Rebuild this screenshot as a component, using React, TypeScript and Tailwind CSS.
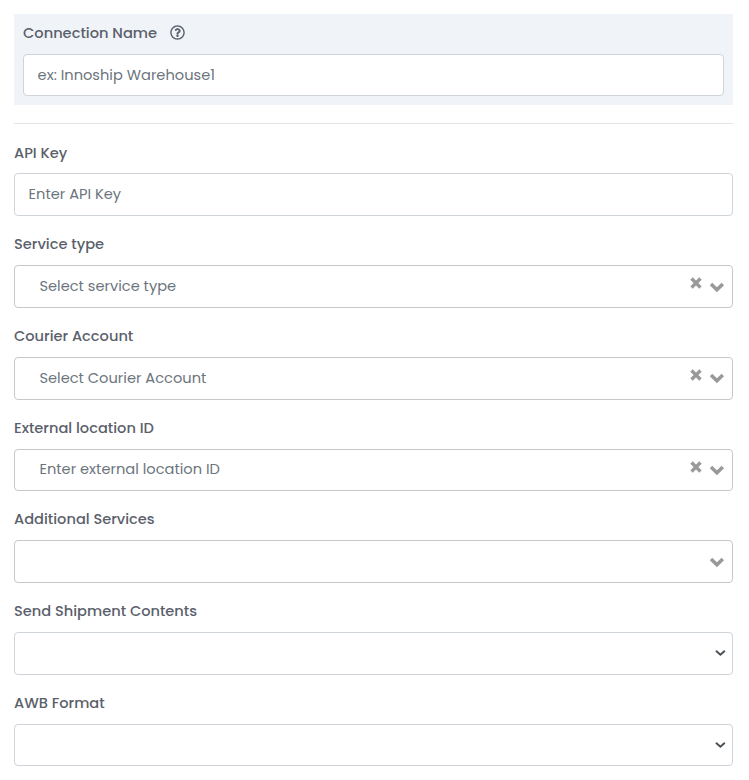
import type { ReactNode } from 'react';
import { FaRegQuestionCircle } from 'react-icons/fa';

interface FieldProps {
  id: string;
  label: string;
  children: ReactNode;
}

function Field({ id, label, children }: FieldProps) {
  return (
    <div>
      <div className="h-[49.02px] pt-[18.2px]">
        <label
          htmlFor={id}
          className="block w-fit text-[14.6px] font-medium leading-[21px] text-[#5b5f6b]"
        >
          {label}
        </label>
      </div>
      {children}
    </div>
  );
}

interface ComboBoxProps {
  id: string;
  placeholder?: string;
  clearable?: boolean;
}

function ComboBox({ id, placeholder = '', clearable = false }: ComboBoxProps) {
  return (
    <div className="flex h-[42.7px] rounded border border-[#c8c8c8] bg-white pl-[24.4px] pr-[8px]">
      <input
        id={id}
        type="text"
        placeholder={placeholder}
        className="min-w-0 flex-1 bg-transparent pt-[0.9px] text-[14.63px] outline-none placeholder:text-[#6c757d]"
      />
      {clearable && (
        <button type="button" aria-label="Clear" className="mr-[7px] mt-[11px] h-[12px] w-[12px]">
          <svg viewBox="0 0 12 12" className="block h-[12px] w-[12px]" fill="none" stroke="#999" strokeWidth="3.3">
            <path d="M1.5 1.5 10.5 10.5M10.5 1.5 1.5 10.5" />
          </svg>
        </button>
      )}
      <button type="button" aria-label="Open" className="mt-[15.4px] h-[11px] w-[15px]">
        <svg viewBox="0 0 15 11" className="block h-[11px] w-[15px] overflow-visible" fill="none" stroke="#999" strokeWidth="3.5">
          <path d="M2 1.9 7.9 7.7 13.8 1.9" />
        </svg>
      </button>
    </div>
  );
}

function SelectBox({ id }: { id: string }) {
  return (
    <div className="flex h-[42.7px] items-center rounded border border-[#ced4da] bg-white pr-[6px]">
      <select id={id} className="h-full min-w-0 flex-1 appearance-none bg-transparent outline-none" />
      <svg viewBox="0 0 12 8" className="h-[8px] w-[12px]" fill="none" stroke="#495057" strokeWidth="2" strokeLinecap="round">
        <path d="M2.5 2.3 6.4 5.7 10.3 2.3" />
      </svg>
    </div>
  );
}

export default function App() {
  return (
    <form className="min-h-[780px] bg-white pl-[14px] pr-[16px] pt-[14px] font-[Poppins,Inter,sans-serif]">
      {/* Connection name */}
      <div className="h-[91px] bg-[#f0f4f9] px-[9px] pt-[9px]">
        <div className="flex h-[31px] items-start">
          <label
            htmlFor="connection"
            className="text-[14.63px] font-medium leading-[21px] text-[#5b5f6b]"
          >
            Connection Name
          </label>
          <FaRegQuestionCircle className="ml-[13px] mt-[2px] h-[15px] w-[15px] text-[#5b5f6b]" />
        </div>
        <input
          id="connection"
          type="text"
          placeholder="ex: Innoship Warehouse1"
          className="block h-[42px] w-full rounded border border-[#ced4da] bg-white px-[13.6px] text-[14.63px] outline-none placeholder:text-[#6c757d]"
        />
      </div>

      <hr className="mb-[0.42px] mt-[18px] border-t border-[#e3e4e6]" />

      <Field id="api-key" label="API Key">
        <input
          id="api-key"
          type="text"
          placeholder="Enter API Key"
          className="block h-[42.7px] w-full rounded border border-[#ced4da] bg-white px-[13.6px] text-[14.63px] outline-none placeholder:text-[#6c757d]"
        />
      </Field>
      <Field id="service" label="Service type">
        <ComboBox id="service" placeholder="Select service type" clearable />
      </Field>
      <Field id="courier" label="Courier Account">
        <ComboBox id="courier" placeholder="Select Courier Account" clearable />
      </Field>
      <Field id="location" label="External location ID">
        <ComboBox id="location" placeholder="Enter external location ID" clearable />
      </Field>
      <Field id="additional" label="Additional Services">
        <ComboBox id="additional" />
      </Field>
      <Field id="contents" label="Send Shipment Contents">
        <SelectBox id="contents" />
      </Field>
      <Field id="awb" label="AWB Format">
        <SelectBox id="awb" />
      </Field>
    </form>
  );
}
